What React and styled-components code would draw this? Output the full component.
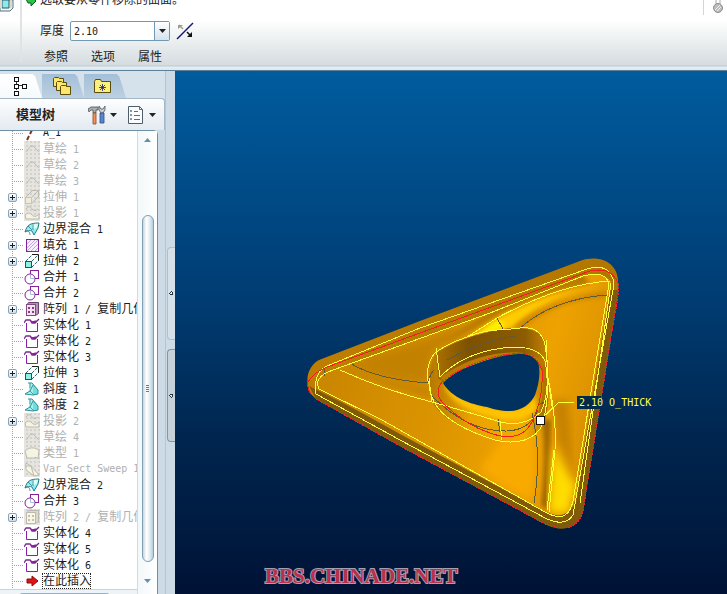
import React, { useState } from 'react'
import styled, { createGlobalStyle } from 'styled-components'

const treeItems = [
  { icon: 'axis', label: 'A_1' },
  { icon: 'sketch', label: '草绘 1', off: true },
  { icon: 'sketch', label: '草绘 2', off: true },
  { icon: 'sketch', label: '草绘 3', off: true },
  { icon: 'extrude', label: '拉伸 1', off: true, more: true },
  { icon: 'project', label: '投影 1', off: true, more: true },
  { icon: 'blend', label: '边界混合 1' },
  { icon: 'fill', label: '填充 1', more: true },
  { icon: 'extrude', label: '拉伸 2', more: true },
  { icon: 'merge', label: '合并 1' },
  { icon: 'merge', label: '合并 2' },
  { icon: 'pattern', label: '阵列 1 / 复制几何', more: true },
  { icon: 'solid', label: '实体化 1' },
  { icon: 'solid', label: '实体化 2' },
  { icon: 'solid', label: '实体化 3' },
  { icon: 'extrude', label: '拉伸 3', more: true },
  { icon: 'draft', label: '斜度 1' },
  { icon: 'draft', label: '斜度 2' },
  { icon: 'project', label: '投影 2', off: true, more: true },
  { icon: 'sketch', label: '草绘 4', off: true },
  { icon: 'type', label: '类型 1', off: true },
  { icon: 'sweep', label: 'Var Sect Sweep 1', off: true },
  { icon: 'blend', label: '边界混合 2' },
  { icon: 'merge', label: '合并 3' },
  { icon: 'pattern', label: '阵列 2 / 复制几何', off: true, more: true },
  { icon: 'solid', label: '实体化 4' },
  { icon: 'solid', label: '实体化 5' },
  { icon: 'solid', label: '实体化 6' },
  { icon: 'insert', label: '在此插入', selected: true },
]

// suppressed features lose their colours
const palette = (off) => ({
  line: off ? '#bcbab0' : '#2a6a76',
  cyan: off ? '#efedda' : '#8ff0e6',
  purple: off ? '#bcbab0' : '#83239b',
  soft: off ? '#e6e3d0' : '#c4a4e4',
})

const FeatureIcon = ({ kind, off }) => {
  const c = palette(off)
  const shapes = {
    axis: <path d="M3 15l2-4M6 9l2-4M9 3l1-2" stroke="#7a3a12" strokeWidth="2" />,
    sketch: <path d="M2 11c2-1 3-6 6-6s4 4 7 6" stroke={c.line} />,
    extrude: (
      <>
        <path d="M2 8l6-6M8 8l6-6M8 14l7-7" stroke={c.line} strokeDasharray={off ? 'none' : '3 1'} />
        <path d="M8 1.500h6.500v6" stroke={off ? c.line : '#1c1c1c'} />
        <rect x="1.500" y="8.500" width="6" height="6" fill={c.cyan} stroke={off ? '#cfc79a' : '#1d5562'} />
      </>
    ),
    project: (
      <>
        <path d="M2 4c3-4 5-2 6 0s4 2 6 0" stroke={c.line} />
        <path d="M1 10c3-3 5-2 7 0s4 2 7-1v5H2z" fill={off ? '#f5f3e2' : c.cyan} stroke={c.line} />
      </>
    ),
    blend: (
      <>
        <path d="M3 6c3-3 6-4 12-4l-1 6-4 6-2-4c-3-1-5 0-7 1z" fill="#8ff0f2" />
        <path d="M8 3l6-1-1 5-4 1z" fill="#d9fffc" />
        <path d="M1 11c1-4 3-7 6-8s6-1 8-1l-1 5-4 7-2-4c-2-1-5 0-7 1z" stroke="#2c7a88" />
        <path d="M1 10c3-1 5 1 5 4M4 5l4 4M9 3v6" stroke="#2c7a88" strokeWidth=".8" />
      </>
    ),
    fill: (
      <>
        <rect x="2.500" y="2.500" width="12" height="12" fill="#f6effc" stroke={c.purple} />
        <path d="M3 7l4-4M3 11l8-8M3 14L14 3M7 14l7-7M11 14l3-3" stroke={c.soft} />
      </>
    ),
    merge: (
      <>
        <rect x="6.500" y="1.500" width="8" height="8" fill="#fff" stroke={c.purple} />
        <circle cx="6" cy="10" r="5" fill="#fff" stroke={c.purple} />
        <path d="M6.500 5.500v4h4" stroke="#a9bfe2" />
      </>
    ),
    pattern: (
      <>
        <path d="M2.500 4.500l2-3h10v11l-3 2z" fill={off ? '#dcd9c9' : '#b693b4'} stroke={off ? c.line : '#6d3f70'} />
        <rect x="2.500" y="3.500" width="9" height="11" fill={off ? '#f8f6e6' : '#f3e2ee'} stroke={off ? c.line : '#7f4b80'} />
        <path d="M4 6h2v2H4zM8 6h2v2H8zM4 10h2v2H4zM8 10h2v2H8z" fill={off ? '#c4c1b0' : '#8a3c8c'} />
      </>
    ),
    solid: (
      <>
        <path d="M2.500 6v8.500h11V6" stroke={c.purple} />
        <path d="M0 6l2-3h4l2 3h3l4-4M6 3l2 2 5-1" stroke={c.purple} strokeWidth="1.300" />
      </>
    ),
    draft: (
      <>
        <path d="M5 2l4 1 5 6v4l-5 1-8-1 4-3z" fill="#a4f3ee" />
        <path d="M9 3l5 6v4l-5 1z" fill="#6fded9" />
        <path d="M4 2h4l6 7v4l-5 1-8-1 5-3 3-6" stroke="#2e8f98" />
        <path d="M6 10l4 4M6 2v5" stroke="#2e8f98" strokeWidth=".8" />
      </>
    ),
    type: <path d="M1 6c4-4 9-4 14-1l-1 9c-1-2-3-2-4-1H3z" fill="#f5f3e2" stroke={c.line} />,
    sweep: (
      <>
        <path d="M2 2l5 3 8 9-5 1-8-6z" fill="#f5f3e2" stroke={c.line} />
        <path d="M7 5l3 10M1 5l6 0" stroke={c.line} />
      </>
    ),
    insert: <path d="M3 6h5V3l6 5-6 5v-3H3z" fill="#dc1414" stroke="#8a0c0c" />,
  }
  return (
    <IconBox $off={off} viewBox="0 0 16 16" aria-hidden="true">
      {shapes[kind]}
    </IconBox>
  )
}

// Chinese runs are set larger than the half-width characters beside them
const MixedText = ({ text }) =>
  text.split(/([\u4e00-\u9fff]+)/).map((part, i) => (i % 2 ? <Han key={i}>{part}</Han> : part))

const TreeRow = ({ item }) => (
  <Row>
    <Gutter>
      {item.more && <Expander aria-label={'展开 ' + item.label} />}
    </Gutter>
    <FeatureIcon kind={item.icon} off={item.off} />
    <RowLabel $off={item.off} $selected={item.selected}>
      <MixedText text={item.label} />
    </RowLabel>
  </Row>
)

const Arrow = ({ up }) => (
  <svg width="7" height="4" viewBox="0 0 7 4" aria-hidden="true">
    <path d={up ? 'M3.500 0L7 4H0z' : 'M0 0h7L3.500 4z'} fill="currentColor" />
  </svg>
)

const Toolbar = () => {
  const [thick, setThick] = useState('2.10')
  return (
    <Bar>
      <ToolSlot>
        <svg width="14" height="12" viewBox="0 0 14 12" aria-hidden="true">
          <path d="M0 0h13v8l-3 3H0z" fill="#f1f5f7" stroke="#55747f" />
          <path d="M2 0h7v8H2z" fill="#8ce9ee" stroke="#2e5961" />
          <path d="M0 0h2v8H0zM10 0h2v7l-2 2z" fill="#dcd8cc" />
        </svg>
      </ToolSlot>
      <Dashboard>
        <Message>
          <svg width="12" height="10" viewBox="0 0 12 10" aria-hidden="true">
            <path d="M1 3h5V0l5 5-5 5V7H3z" fill="#27c447" stroke="#0a5a1c" />
          </svg>
          选取要从零件移除的曲面。
        </Message>
        <Field>
          <label htmlFor="thick">厚度</label>
          <Combo>
            <input id="thick" value={thick} onChange={(e) => setThick(e.target.value)} />
            <button aria-label="厚度列表"><Arrow /></button>
          </Combo>
          <FlipButton aria-label="反向">
            <svg width="18" height="18" viewBox="0 0 18 18">
              <path d="M1 17L17 1" stroke="#14147c" strokeWidth="1.500" />
              <path d="M3 3l4 4" stroke="#a09a86" strokeWidth="1.500" />
              <path d="M2 7V3h5z" fill="#a09a86" />
              <path d="M11 10l3 3" stroke="#111" strokeWidth="1.500" />
              <path d="M16 10v5h-5z" fill="#111" />
            </svg>
          </FlipButton>
        </Field>
        <Menu>
          <button>参照</button>
          <button>选项</button>
          <button>属性</button>
        </Menu>
      </Dashboard>
      <Status>
        <svg width="12" height="14" viewBox="0 0 12 14" aria-hidden="true">
          <path d="M4 0v5M8 0v5" stroke="#aaa" />
          <circle cx="6" cy="8" r="4.500" fill="#bdbdbd" stroke="#8c8c8c" />
          <path d="M3 10l5-5M5 11l4-4" stroke="#eee" />
        </svg>
      </Status>
    </Bar>
  )
}

const Navigator = () => (
  <Side>
    <Panel>
      <Tabs>
        <Tab $active aria-label="模型树">
          <svg width="18" height="20" viewBox="0 0 18 20">
            <path d="M4.500 5v9M5 9.500h6" stroke="#333" />
            <g fill="#fff" stroke="#111">
              <rect x="2.500" y="1.500" width="4" height="4" />
              <rect x="2.500" y="8.500" width="4" height="4" />
              <rect x="2.500" y="15.500" width="4" height="4" />
              <rect x="10.500" y="8.500" width="4" height="4" />
            </g>
          </svg>
        </Tab>
        <Tab aria-label="文件夹浏览器">
          <svg width="20" height="20" viewBox="0 0 20 20">
            <g fill="#fae76b" stroke="#5a4c0c">
              <path d="M1.500 2.500l1-1h4l1 1h4v8h-10z" />
              <path d="M4.500 6.500l1-1h4l1 1h4v8h-10z" />
              <path d="M8.500 10.500l1-1h4l1 1h4v8h-10z" />
            </g>
          </svg>
        </Tab>
        <Tab aria-label="收藏夹">
          <svg width="18" height="16" viewBox="0 0 18 16">
            <path d="M.5 3.500l1-2h5l1 2h9v11H.5z" fill="#fbf07c" stroke="#5a4c0c" />
            <path d="M8.500 6v7M5 9.500h7M6 7l5 5M11 7l-5 5" stroke="#19197c" strokeWidth=".8" />
          </svg>
        </Tab>
      </Tabs>
      <Head>
        <h2>模型树</h2>
        <HeadButton aria-label="设置">
          <svg width="18" height="20" viewBox="0 0 18 20">
            <path d="M0 4l3-2h7v3H8v3H5V5H3L1 7z" fill="#a9aeb2" stroke="#4c5256" strokeWidth=".8" />
            <path d="M5 8h3v11H5z" fill="#f0935c" stroke="#8c4426" strokeWidth=".8" />
            <path d="M11 1v4l2 3h2l2-3V1l-2 3h-2z" fill="#c7cdd2" stroke="#4b555d" strokeWidth=".8" />
            <path d="M12 8h4v10h-4z" fill="#5a86cf" stroke="#2b4a80" strokeWidth=".8" />
          </svg>
          <Arrow />
        </HeadButton>
        <HeadButton aria-label="显示">
          <svg width="18" height="20" viewBox="0 0 18 20">
            <path d="M1.500 1.500h11l3 3v14h-14z" fill="#fbfcfd" stroke="#4d5d69" />
            <path d="M12.500 1.500v3h3M7 6.500h4M7 10.500h6M7 14.500h6" stroke="#5c6f7e" fill="none" />
            <path d="M3 5h2v2H3zM3 9h2v2H3zM3 13h2v2H3z" fill="#8797a3" />
          </svg>
          <Arrow />
        </HeadButton>
      </Head>
      <TreeBox>
        <TreeMain>
          <List>
            {treeItems.map((item, i) => <TreeRow key={i} item={item} />)}
          </List>
          <Bottom><span /></Bottom>
        </TreeMain>
        <Scroll>
          <ScrollButton aria-label="向上滚动"><Arrow up /></ScrollButton>
          <Space $grow={67} />
          <Thumb><i /><i /><i /><i /></Thumb>
          <Space $grow={10} />
          <ScrollButton aria-label="向下滚动"><Arrow /></ScrollButton>
        </Scroll>
      </TreeBox>
    </Panel>
    <Sash>
      <Grip aria-label="隐藏导航器" />
      <Grip $raised aria-label="显示浏览器" />
    </Sash>
  </Side>
)

const body = 'M319 360L420 321L580 261C600 254 617 263 618 280C619 291 616 305 613 325L583 511C579 528 562 533 545 524L400 446L316 399C305 391 303 369 319 360Z'
const face = 'M333 370L420 339L490 313L583 276Q604 271 611 282L575 500Q568 522 546 512L400 434L319 389Q313 377 333 370Z'
const hole = 'M443 383C452 374 462 369 470 366C483 361 500 355 517 354C527 353 535 357 538 363C541 371 539 384 535 395C531 404 521 411 510 411C500 411 493 409 487 407C470 404 452 398 443 383Z'

const Model = () => (
  <svg viewBox="175 71 552 523" preserveAspectRatio="xMidYMid slice" role="img" aria-label="三维模型">
    <defs>
      <linearGradient id="rim" x1="0" y1="0" x2="1" y2="1">
        <stop offset="0" stopColor="#c58300" />
        <stop offset=".5" stopColor="#b27600" />
        <stop offset="1" stopColor="#946300" />
      </linearGradient>
      <linearGradient id="face" gradientUnits="userSpaceOnUse" x1="340" y1="360" x2="590" y2="440">
        <stop offset="0" stopColor="#cc8700" />
        <stop offset=".45" stopColor="#dd9600" />
        <stop offset=".75" stopColor="#eea200" />
        <stop offset="1" stopColor="#d99000" />
      </linearGradient>
      <linearGradient id="wall" x1="0" y1="0" x2="1" y2="0">
        <stop offset="0" stopColor="#a96f00" />
        <stop offset=".3" stopColor="#7d5100" />
        <stop offset=".8" stopColor="#8c5c00" />
        <stop offset="1" stopColor="#c58100" />
      </linearGradient>
      <linearGradient id="bowl" x1="0" y1="0" x2="1" y2="0">
        <stop offset="0" stopColor="#b57800" />
        <stop offset=".35" stopColor="#eaa200" />
        <stop offset=".8" stopColor="#f2ac00" />
        <stop offset="1" stopColor="#b57700" />
      </linearGradient>
      <clipPath id="faceClip"><path d={face} /></clipPath>
      <filter id="blur4"><feGaussianBlur stdDeviation="4" /></filter>
      <filter id="blur2"><feGaussianBlur stdDeviation="2" /></filter>
    </defs>

    <path d={body} fill="url(#rim)" />
    <path d="M309 386L400 432L546 512Q570 520 577 500L611 290L618 290L583 511C579 528 562 533 545 524L400 446L316 399Z" fill="#80590a" />
    <path d={face} fill="url(#face)" />

    <g clipPath="url(#faceClip)">
      <path d="M350 363Q380 382 428 383L433 352L500 312L420 341Z" fill="#c38100" filter="url(#blur4)" />
      <path d="M350 366Q390 384 430 386L430 399L345 372Z" fill="#c98600" filter="url(#blur2)" />
      <path d="M440 345L497 316Q545 291 590 284L583 274L490 311Z" fill="#b87900" filter="url(#blur2)" />
      <path d="M470 337L497 319Q545 293 604 284L575 291Q535 304 512 328Z" fill="#ffcc00" filter="url(#blur2)" />
      <path d="M475 336L497 320L506 324L499 330Z" fill="#fff000" filter="url(#blur2)" />
      <path d="M512 328Q550 299 608 291L607 297Q556 300 522 328Z" fill="#c98500" filter="url(#blur2)" />
      <path d="M552 400L568 400L572 470L558 440Z" fill="#c58100" filter="url(#blur4)" />
      <path d="M542 420L551 420L548 510L541 505Q547 460 542 420Z" fill="#a06700" filter="url(#blur2)" />
      <path d="M554 445Q566 475 576 485L568 514L549 512Z" fill="#ffdc00" filter="url(#blur4)" />
      <path d="M500 442L532 428Q539 460 532 502L480 470Z" fill="#f9aa00" filter="url(#blur4)" />
    </g>

    <path d="M436 353C456 341 470 333 497 330C520 326 541 328 546 343C550 370 549 396 543 423C537 440 518 445 500 440C466 431 431 415 431 395Q426 370 436 353Z" fill="url(#bowl)" />
    <path d="M436 353C456 341 470 336 497 330C520 326 540 327 545 342L547 373L538 367Q535 354 517 354Q470 359 443 381L438 379Z" fill="url(#wall)" />
    <path d="M441 377Q470 356 503 353Q530 350 541 361L538 367Q535 354 517 354Q470 359 443 381Z" fill="#b97b00" />
    <path d="M443 384Q460 400 487 407C500 410 522 417 535 395L537 410Q520 426 490 416Q452 407 443 384Z" fill="#ffc400" filter="url(#blur2)" />
    <path d="M541 365Q547 393 536 418L545 421Q552 392 546 365Z" fill="#b07200" />
    <path d={hole} fill="#01315f" />

    <Strokes $color="#5e5b38">
      <path d="M350 363Q375 379 428 383M520 328Q553 299 607 295M497 318L503 329M532 413Q542 455 534 503" />
      <path d="M447 360Q480 341 515 336M428 383Q430 374 434 370M431 395Q467 432 507 431Q530 430 538 410" />
      <path d="M538 405L547 401M498 419L500 432M324 368L325 376" />
    </Strokes>
    <Strokes $color="#ffff35">
      <path d="M316 394Q313 373 327 366L420 328L587 269Q611 262 614 284L573 515Q566 527 547 519L400 440Z" />
      <path d="M382 420L319 389Q313 377 333 370L490 313L583 276Q606 270 609 284L573 501Q568 525 545 512L382 420" />
      <path d="M610 281Q560 284 497 318L467 337Q444 345 434 354Q423 370 430 387L432 402Q384 390 340 370" />
      <path d="M436 348L440 377Q463 353 503 348Q538 344 545 361Q551 390 541 412Q523 429 497 421Q458 409 432 402" />
      <path d="M467 337C488 328 501 331 520 328C537 326 545 335 546 352Q551 389 543 423C536 441 516 445 495 440Q453 427 438 408Q427 393 430 378" />
      <path d="M546 340L548 378Q557 420 555 450L549 512M548 378L552 406M554 450L547 510" />
      <path d="M611 283L580 503M500 421L502 440M540 420L559 402H574" />
    </Strokes>
    <Strokes $color="#f31b24">
      <path d="M316 399Q306 391 308 382Q313 373 327 367L420 333L590 271Q613 266 619 286" />
      <path d="M443 381Q433 392 443 403Q465 425 490 433Q520 444 532 422Q544 397 542 370L538 362" />
    </Strokes>
    <Strokes $color="#ed2233" $dash>
      <path d="M619 284Q619 294 613 325L583 511Q577 536 545 524L400 446L316 399" />
      <path d="M443 382Q460 367 490 358Q531 347 538 362" />
    </Strokes>

    <rect x="536.500" y="416.500" width="8" height="8" fill="#fff" stroke="#111" />
    <rect x="577" y="396" width="24" height="13" fill="#002b4d" />
    <Dimension x="579" y="406">2.10 O_THICK</Dimension>
    <Watermark x="265" y="583">BBS.CHINADE.NET</Watermark>
  </svg>
)

const App = () => (
  <Page>
    <GlobalStyle />
    <Toolbar />
    <Work>
      <Navigator />
      <Viewport>
        <Model />
      </Viewport>
    </Work>
  </Page>
)

export default App

const GlobalStyle = createGlobalStyle`
  * {
    box-sizing: border-box;
  }
  body {
    margin: 0;
  }
  button, input {
    font: inherit;
    color: inherit;
    padding: 0;
    border: 0;
    background: none;
  }
`

const Page = styled.div`
  display: flex;
  flex-direction: column;
  height: 100vh;
  overflow: hidden;
  font: 12px/16px "Liberation Sans", "Noto Sans CJK SC", sans-serif;
  color: #222;
`

const Bar = styled.header`
  display: flex;
  flex: none;
  background: linear-gradient(#fff 20px, #f1f4f4 35px, #d5dce0 65px, #b9c7d1 66px, #e9eff4 67px, #dfe8ef 69px);
  border-bottom: 1px solid #5b8097;
`

const ToolSlot = styled.div`
  width: 22px;
  margin-bottom: 8px;
  border-right: 2px solid #dfe3e5;
`

const Dashboard = styled.div`
  flex: 1;
  display: flex;
  flex-direction: column;
  padding-bottom: 5px;
`

const Message = styled.div`
  display: flex;
  align-items: flex-end;
  gap: 3px;
  height: 6px;
  padding-left: 3px;
  overflow: hidden;
  line-height: 12px;
  white-space: nowrap;

  svg {
    flex: none;
  }
`

const Field = styled.div`
  display: flex;
  align-items: center;
  gap: 6px;
  padding: 15px 0 0 18px;
`

const Combo = styled.div`
  display: flex;
  width: 100px;
  height: 20px;
  background: #fff;
  border: 1px solid #7199b3;
  border-radius: 2px;

  input {
    flex: 1;
    min-width: 0;
    padding-left: 3px;
    font: 10px "DejaVu Sans Mono", monospace;
  }

  button {
    display: grid;
    place-items: center;
    width: 15px;
    background: linear-gradient(#fff, #d4e2ec);
    border-left: 1px solid #7199b3;
  }
`

const FlipButton = styled.button`
  display: grid;
`

const Menu = styled.div`
  display: flex;
  gap: 23px;
  padding: 8px 0 0 22px;
`

const Status = styled.div`
  display: flex;
  align-items: flex-start;
  height: 15px;
  padding: 0 3px 0 8px;
  border-left: 1px solid #d5d5d5;
`

const Work = styled.div`
  flex: 1;
  min-height: 0;
  display: flex;
`

const Side = styled.aside`
  flex: none;
  display: flex;
  width: 175px;
  background: #cddbe7;
`

const Panel = styled.div`
  flex: 1;
  min-width: 0;
  display: flex;
  flex-direction: column;
`

const Tabs = styled.div`
  display: flex;
  height: 27px;
  padding-top: 3px;
  background: #d5e1eb;
`

const Tab = styled.button`
  display: flex;
  align-items: center;
  width: 42px;
  padding-left: ${(p) => (p.$active ? 12 : 10)}px;
  background: ${(p) => (p.$active ? 'linear-gradient(#fff, #f6fafc)' : 'linear-gradient(#a3bfd8, #bcd0e1)')};
  clip-path: polygon(0 0, 78% 0, 84% 10%, 100% 100%, 0 100%);

  svg {
    fill: none;
  }
`

const Head = styled.div`
  display: flex;
  align-items: center;
  gap: 10px;
  height: 32px;
  padding: 0 8px 0 16px;
  background: linear-gradient(#fdfeff, #e3eaf1);
  border: 1px solid #a3b7c6;
  border-width: 1px 1px 0 0;
  border-top-right-radius: 4px;

  h2 {
    flex: 1;
    margin: 0;
    font-size: 13px;
  }
`

const HeadButton = styled.button`
  display: flex;
  align-items: center;
  gap: 4px;
`

const TreeBox = styled.div`
  flex: 1;
  min-height: 0;
  display: flex;
  margin-right: 7px;
  background: #fff;
  border: 1px solid #6f8fa3;
  border-width: 1px 1px 0 0;
  border-top-right-radius: 5px;
`

const TreeMain = styled.div`
  flex: 1;
  min-width: 0;
  display: flex;
  flex-direction: column;
`

const List = styled.ul`
  flex: 1;
  min-height: 0;
  display: flex;
  flex-direction: column;
  justify-content: flex-end;
  margin: 0;
  padding: 0;
  list-style: none;
  overflow: hidden;
`

const Row = styled.li`
  flex: none;
  display: flex;
  align-items: center;
  height: 16px;
`

const Gutter = styled.span`
  flex: none;
  display: flex;
  align-items: center;
  width: 24px;
  height: 16px;
  padding-left: 8px;
  background:
    repeating-linear-gradient(#a2a2a2 0 1px, transparent 1px 2px) 12px 0 / 1px 16px no-repeat,
    repeating-linear-gradient(90deg, #a2a2a2 0 1px, transparent 1px 2px) 12px 8px / 12px 1px no-repeat;
`

const Expander = styled.button`
  width: 9px;
  height: 9px;
  border: 1px solid #8ba3b8;
  border-radius: 2px;
  background:
    linear-gradient(#123, #123) center / 5px 1px no-repeat,
    linear-gradient(#123, #123) center / 1px 5px no-repeat,
    linear-gradient(#fff, #cfdde8);
`

const IconBox = styled.svg`
  flex: none;
  width: 16px;
  height: 16px;
  fill: none;
  background: ${(p) => (p.$off ? 'conic-gradient(#d4d2ca 25%, #e6e4de 0) 0 0 / 4px 4px' : 'none')};
`

const RowLabel = styled.span`
  margin-left: 2px;
  padding-left: 1px;
  font: 10px/14px "DejaVu Sans Mono", "Noto Sans CJK SC", monospace;
  white-space: pre;
  color: ${(p) => (p.$off ? '#b0b0b0' : '#1c1c1c')};
  outline: ${(p) => (p.$selected ? '1px dotted #222' : 'none')};
  outline-offset: -1px;
`

const Han = styled.span`
  font: 12px/14px "Noto Sans CJK SC", sans-serif;
`

const Bottom = styled.div`
  height: 5px;
  padding: 3px 28px 0 20px;
  background: #edf3f7;
  border-top: 1px solid #c5d3de;

  span {
    display: block;
    height: 2px;
    background: #92b2c7;
    border-radius: 2px 2px 0 0;
  }
`

const Scroll = styled.div`
  flex: none;
  display: flex;
  flex-direction: column;
  align-items: center;
  width: 20px;
  padding-bottom: 5px;
  border-left: 1px solid #cfdce5;
  background: linear-gradient(90deg, #f3f8fa, #fff);
`

const ScrollButton = styled.button`
  display: grid;
  place-items: center;
  width: 18px;
  height: 17px;
  color: #6391ac;
`

const Space = styled.div`
  flex: ${(p) => p.$grow};
`

const Thumb = styled.div`
  flex: 346;
  display: flex;
  flex-direction: column;
  align-items: center;
  justify-content: center;
  gap: 1px;
  width: 12px;
  border: 1px solid #7f9fb2;
  border-radius: 6px;
  background: linear-gradient(90deg, #c4d7e2, #fff 35%, #e4eff5 65%, #b4cdda);

  i {
    width: 3px;
    height: 1px;
    background: #567f98;
  }
`

const Sash = styled.div`
  flex: none;
  display: flex;
  flex-direction: column;
  align-items: flex-end;
  justify-content: center;
  gap: 9px;
  width: 10px;
  padding-top: 24px;
  background: #cddbe7;
  border-left: 1px solid #b5c6d3;
`

const Grip = styled.button`
  width: 8px;
  height: 93px;
  border: 1px solid ${(p) => (p.$raised ? '#8296a5' : '#afc0cc')};
  border-right: 0;
  border-radius: 4px 0 0 4px;
  background:
    radial-gradient(#e8f0f5 1px, #20323f 1px 2px, transparent 2px) center / 5px 5px no-repeat,
    ${(p) => (p.$raised ? '#c6d1da' : '#d5e0e8')};
`

const Viewport = styled.main`
  flex: 1;
  min-width: 0;
  background: linear-gradient(#005c9e, #003b71 45%, #00264f 70%, #001236);

  > svg {
    display: block;
    width: 100%;
    height: 100%;
  }
`

const Strokes = styled.g`
  fill: none;
  stroke: ${(p) => p.$color};
  stroke-width: 1;
  stroke-dasharray: ${(p) => (p.$dash ? '2 1' : 'none')};
  shape-rendering: crispEdges;
`

const Dimension = styled.text`
  font: 10px "DejaVu Sans Mono", monospace;
  fill: #ffff4a;
`

const Watermark = styled.text`
  font: bold 21px "Liberation Serif", serif;
  fill: #b8304c;
  stroke: #a3a0b2;
  stroke-width: 2;
  paint-order: stroke;
`
